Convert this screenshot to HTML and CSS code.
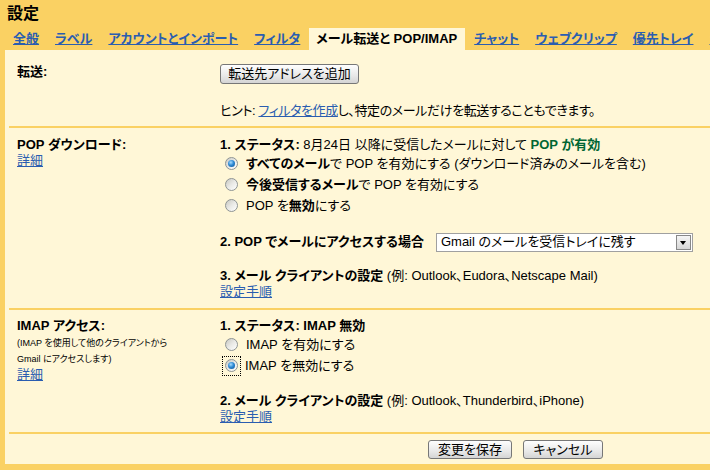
FILE: index.html
```html
<!DOCTYPE html>
<html lang="ja">
<head>
<meta charset="utf-8">
<title>設定</title>
<link rel="stylesheet" href="styles.css">
</head>
<body>
<div class="page">
  <h1 class="title">設定</h1>
  <nav class="tabs">
    <a class="tab" href="#">全般</a>
    <a class="tab" href="#">ラベル</a>
    <a class="tab" href="#">アカウントとインポート</a>
    <a class="tab" href="#">フィルタ</a>
    <span class="tab active">メール転送と POP/IMAP</span>
    <a class="tab" href="#">チャット</a>
    <a class="tab" href="#">ウェブクリップ</a>
    <a class="tab" href="#">優先トレイ</a>
    <a class="tab" href="#">ラボ</a>
  </nav>
  <div class="panel">
    <section class="sec sec-fwd">
      <div class="lbl"><b>転送:</b></div>
      <div class="body">
        <button class="btn btn-add" type="button">転送先アドレスを追加</button>
        <p class="hint">ヒント: <a href="#">フィルタを作成</a>し、特定のメールだけを転送することもできます。</p>
      </div>
    </section>

    <section class="sec sec-pop">
      <div class="lbl">
        <b>POP ダウンロード:</b><br>
        <a href="#">詳細</a>
      </div>
      <div class="body">
        <div class="line"><b>1. ステータス:</b> 8月24日 以降に受信したメールに対して <b class="green">POP が有効</b></div>
        <div class="opt"><span class="radio on"></span><span><b>すべてのメール</b>で POP を有効にする (ダウンロード済みのメールを含む)</span></div>
        <div class="opt"><span class="radio"></span><span><b>今後受信するメール</b>で POP を有効にする</span></div>
        <div class="opt"><span class="radio"></span><span>POP を<b>無効</b>にする</span></div>
        <div class="selrow">
          <b>2. POP でメールにアクセスする場合</b>
          <div class="select"><span class="seltext">Gmail のメールを受信トレイに残す</span><span class="arrow"></span></div>
        </div>
        <div class="line step3"><b>3. メール クライアントの設定</b> (例: Outlook、Eudora、Netscape Mail)</div>
        <div class="line"><a href="#">設定手順</a></div>
      </div>
    </section>

    <section class="sec sec-imap">
      <div class="lbl">
        <b>IMAP アクセス:</b>
        <div class="small first">(IMAP を使用して他のクライアントから</div>
        <div class="small">Gmail にアクセスします)</div>
        <a href="#">詳細</a>
      </div>
      <div class="body">
        <div class="line"><b>1. ステータス: IMAP 無効</b></div>
        <div class="opt"><span class="radio"></span><span>IMAP を有効にする</span></div>
        <div class="opt"><span class="focus"><span class="radio on"></span></span><span>IMAP を無効にする</span></div>
        <div class="line step2"><b>2. メール クライアントの設定</b> (例: Outlook、Thunderbird、iPhone)</div>
        <div class="line"><a href="#">設定手順</a></div>
      </div>
    </section>

    <div class="actions">
      <button class="btn btn-save" type="button">変更を保存</button>
      <button class="btn btn-cancel" type="button">キャンセル</button>
    </div>
  </div>
</div>
</body>
</html>
```

FILE: styles.css
```css
html, body {
  margin: 0;
  padding: 0;
  overflow: hidden;
}

body {
  width: 710px;
  height: 470px;
  background: #fad163;
  color: #000;
  font-family: "Liberation Sans", "Noto Sans CJK JP", sans-serif;
  font-size: 13px;
  line-height: 16px;
  font-feature-settings: "palt";
}

a {
  color: #2a5db0;
  text-decoration: underline;
}

.page {
  width: 710px;
}

.title {
  margin: 0;
  height: 28px;
  box-sizing: border-box;
  padding: 4px 7px 0;
  font-size: 16px;
  line-height: 20px;
  font-weight: bold;
}

.tabs {
  display: flex;
  flex-wrap: nowrap;
  white-space: nowrap;
  gap: 2px;
  padding-left: 6px;
  height: 22px;
  overflow: hidden;
}

.tab {
  flex: none;
  padding: 0 7px;
  line-height: 22px;
  font-weight: bold;
  color: #2a5db0;
  text-decoration: underline;
}

.tab.active {
  background: #fff7d7;
  color: #000;
  text-decoration: none;
  padding: 0 8px 0 7px;
}

.panel {
  margin-left: 5px;
  background: #fff7d7;
}

.sec {
  display: grid;
  grid-template-columns: 211px 1fr;
  margin-left: 4px;
  border-bottom: 2px solid #fad163;
}

.lbl {
  padding-left: 8px;
}

.body {
  min-width: 0;
}

.sec-fwd {
  padding: 14px 0 7px;
}

.hint {
  margin: 19px 0 0;
  white-space: nowrap;
  letter-spacing: -0.4px;
}

.sec-pop {
  padding: 9px 0 8px;
}

.sec-imap {
  padding: 8px 0 7px;
}

.line {
  white-space: nowrap;
}

.green {
  color: #006633;
}

.opt {
  display: flex;
  align-items: center;
  height: 21px;
  white-space: nowrap;
}

.radio {
  flex: none;
  display: inline-flex;
  align-items: center;
  justify-content: center;
  width: 13px;
  height: 13px;
  box-sizing: border-box;
  margin: 0 8px 0 5px;
  border-radius: 50%;
  border: 1px solid #8e9494;
  background: linear-gradient(135deg, #c8c8c2 0%, #e9e9e6 50%, #ffffff 100%);
}

.radio.on::after {
  content: "";
  width: 7px;
  height: 7px;
  border-radius: 50%;
  background: radial-gradient(circle at 40% 35%, #a8dcff 0%, #2f8ad4 45%, #0d4f8f 100%);
}

.focus {
  flex: none;
  display: inline-flex;
  align-items: center;
  justify-content: center;
  width: 19px;
  height: 20px;
  box-sizing: border-box;
  margin: 0 4px 0 2px;
  border: 1px dotted #000;
}

.focus .radio {
  margin: 0;
}

.selrow {
  display: flex;
  align-items: center;
  gap: 12px;
  height: 20px;
  margin-top: 16px;
  white-space: nowrap;
}

.select {
  flex: none;
  display: flex;
  align-items: center;
  width: 257px;
  height: 19px;
  box-sizing: border-box;
  border: 1px solid #a0a0a0;
  background: #fff;
}

.seltext {
  padding-left: 4px;
}

.arrow {
  margin-left: auto;
  margin-right: 1px;
  width: 15px;
  height: 15px;
  box-sizing: border-box;
  border: 1px solid #888;
  background: linear-gradient(#f6f6f6, #d6d6d6);
  display: flex;
  align-items: center;
  justify-content: center;
}

.arrow::after {
  content: "";
  width: 0;
  height: 0;
  border-left: 3.5px solid transparent;
  border-right: 3.5px solid transparent;
  border-top: 4px solid #000;
  margin-top: 1px;
}

.step3 {
  margin-top: 16px;
}

.step2 {
  margin-top: 17px;
}

.small {
  font-size: 9px;
  line-height: 16px;
  white-space: nowrap;
}

.small.first {
  margin-top: 1px;
}

.btn {
  display: block;
  font: inherit;
  font-feature-settings: "palt";
  color: #000;
  height: 20px;
  padding: 0;
  margin: 0;
  white-space: nowrap;
  border: 1px solid #777;
  border-radius: 3px;
  background: linear-gradient(#fefefe, #e8e8e8 60%, #d4d4d4);
  line-height: 16px;
  text-align: center;
}

.btn-add {
  width: 139px;
}

.actions {
  display: flex;
  gap: 11px;
  padding: 6px 0 5px 419px;
  margin-left: 4px;
}

.btn-save {
  width: 84px;
  height: 19px;
}

.btn-cancel {
  width: 80px;
  height: 19px;
}
```
